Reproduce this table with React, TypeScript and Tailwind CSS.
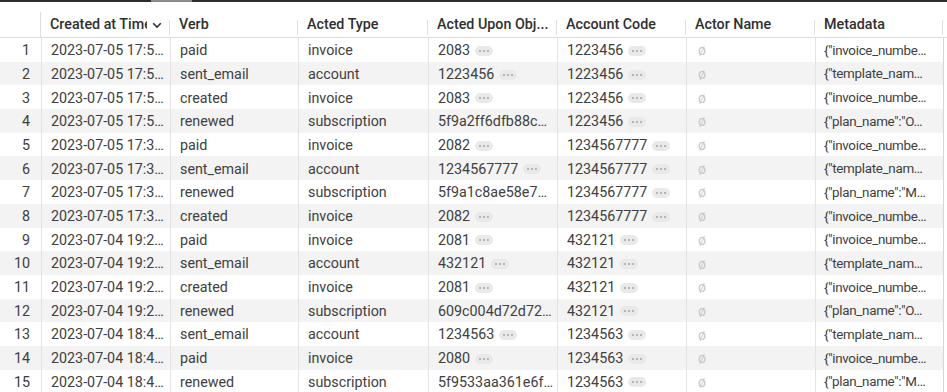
import React from "react";

type Row = [string, string, string, string, boolean, string, boolean, string];

const rows: Row[] = [
  ["2023-07-05 17:5…", "paid", "invoice", "2083", true, "1223456", true, '{"invoice_numbe…'],
  ["2023-07-05 17:5…", "sent_email", "account", "1223456", true, "1223456", true, '{"template_nam…'],
  ["2023-07-05 17:5…", "created", "invoice", "2083", true, "1223456", true, '{"invoice_numbe…'],
  ["2023-07-05 17:5…", "renewed", "subscription", "5f9a2ff6dfb88c…", false, "1223456", true, '{"plan_name":"O…'],
  ["2023-07-05 17:3…", "paid", "invoice", "2082", true, "1234567777", true, '{"invoice_numbe…'],
  ["2023-07-05 17:3…", "sent_email", "account", "1234567777", true, "1234567777", true, '{"template_nam…'],
  ["2023-07-05 17:3…", "renewed", "subscription", "5f9a1c8ae58e7…", false, "1234567777", true, '{"plan_name":"M…'],
  ["2023-07-05 17:3…", "created", "invoice", "2082", true, "1234567777", true, '{"invoice_numbe…'],
  ["2023-07-04 19:2…", "paid", "invoice", "2081", true, "432121", true, '{"invoice_numbe…'],
  ["2023-07-04 19:2…", "sent_email", "account", "432121", true, "432121", true, '{"template_nam…'],
  ["2023-07-04 19:2…", "created", "invoice", "2081", true, "432121", true, '{"invoice_numbe…'],
  ["2023-07-04 19:2…", "renewed", "subscription", "609c004d72d72…", false, "432121", true, '{"plan_name":"O…'],
  ["2023-07-04 18:4…", "sent_email", "account", "1234563", true, "1234563", true, '{"template_nam…'],
  ["2023-07-04 18:4…", "paid", "invoice", "2080", true, "1234563", true, '{"invoice_numbe…'],
  ["2023-07-04 18:4…", "renewed", "subscription", "5f9533aa361e6f…", false, "1234563", true, '{"plan_name":"M…'],
];

// widths of the data columns after the row-number column
const widths = ["w-[129px]", "w-[128px]", "w-[130px]", "w-[129px]", "w-[129px]", "w-[129px]", "w-[128px]"];
const headers = ["Created at Time", "Verb", "Acted Type", "Acted Upon Obj...", "Account Code", "Actor Name", "Metadata"];

function More() {
  return (
    <span className="ml-[5px] inline-flex items-center justify-center gap-[2px] w-[18px] h-[10px] rounded-full bg-[#e9e9e9]">
      <span className="w-[2px] h-[2px] rounded-full bg-[#a4a4a4]" />
      <span className="w-[2px] h-[2px] rounded-full bg-[#a4a4a4]" />
      <span className="w-[2px] h-[2px] rounded-full bg-[#a4a4a4]" />
    </span>
  );
}

function Cell({ w, children, pl = "pl-[9px]" }: { w: string; children: React.ReactNode; pl?: string }) {
  return (
    <div className={`${w} shrink-0 h-full flex items-center pt-[2px] ${pl} pr-1 overflow-hidden whitespace-nowrap border-l border-[#e3e3e3]`}>
      {children}
    </div>
  );
}

export default function App() {
  return (
    <div
      className="w-[947px] h-[392px] bg-white overflow-hidden text-[14.3px] text-[#404040]"
      style={{ fontFamily: "Roboto, 'Liberation Sans', sans-serif" }}
    >
      {/* top scroll strip */}
      <div className="h-[2px] flex bg-[#2b2d31]">
        <div className="w-[151px]" />
        <div className="w-[41px] bg-[#8a8c90]" />
      </div>

      {/* header */}
      <div className="h-[36px] flex border-b border-[#dcdcdc]">
        <div className="w-[41px] shrink-0 flex items-end">
          <div className="ml-auto w-px h-[25px] bg-[#dcdcdc]" />
        </div>
        {headers.map((h, i) => (
          <div key={h} className={`${widths[i]} shrink-0 flex items-center pt-[11px] pl-[9px] pr-[4px] relative`}>
            <span className="flex-1 min-w-0 font-medium text-[#2f2f2f] whitespace-nowrap overflow-hidden">{h}</span>
            {i === 0 && (
              <svg width="12" height="12" viewBox="0 0 12 12" className="ml-[4px] mr-[3px] shrink-0">
                <path d="M2.2 4.2 6 8 9.8 4.2" fill="none" stroke="#333" strokeWidth="1.6" />
              </svg>
            )}
            <div className="absolute right-0 top-[18px] w-px h-[15px] bg-[#e0e0e0]" />
          </div>
        ))}
        <div className="flex-1" />
      </div>

      {/* body */}
      <div className="flex flex-col">
        {rows.map((r, idx) => (
          <div
            key={idx}
            className={`h-[23.7px] flex ${idx % 2 === 1 ? "bg-[#f3f3f3]" : "bg-white"}`}
          >
            <div className="w-[41px] shrink-0 h-full flex items-center justify-end pt-[2px] pr-[11px]">
              {idx + 1}
            </div>
            <Cell w={widths[0]}>{r[0]}</Cell>
            <Cell w={widths[1]}>{r[1]}</Cell>
            <Cell w={widths[2]}>{r[2]}</Cell>
            <Cell w={widths[3]}>
              {r[3]}
              {r[4] && <More />}
            </Cell>
            <Cell w={widths[4]}>
              {r[5]}
              {r[6] && <More />}
            </Cell>
            <Cell w={widths[5]}>
              <span className="text-[#c6c6c6] text-[14px] ml-[2px]">ø</span>
            </Cell>
            <Cell w={widths[6]} pl="pl-[8px]">
              <span className="text-[13.4px] tracking-[-0.3px]">{r[7]}</span>
            </Cell>
            <div className="flex-1 h-full border-l border-[#d6d6d6] bg-white" />
          </div>
        ))}
      </div>
    </div>
  );
}
